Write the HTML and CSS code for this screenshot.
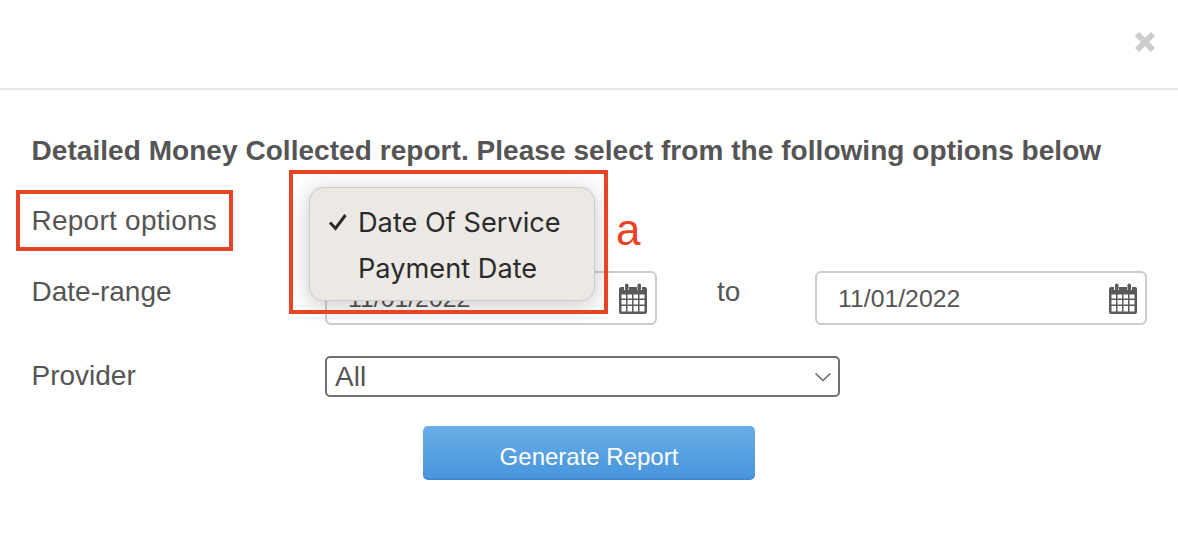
FILE: index.html
```html
<!DOCTYPE html>
<html>
<head>
<meta charset="utf-8">
<title>Detailed Money Collected report</title>
<link rel="stylesheet" href="styles.css">
</head>
<body>
<div class="modal">
    <div class="modal-header">
        <svg class="close" width="22" height="22" viewBox="0 0 22 22"><path d="M3 3 L19 19 M19 3 L3 19" stroke="#cccccc" stroke-width="6"/></svg>
    </div>
    <div class="modal-body">
        <h2 class="intro">Detailed Money Collected report. Please select from the following options below</h2>

        <div class="row row-options">
            <span class="label label-wide">Report options</span>
        </div>

        <div class="row row-dates">
            <span class="label">Date-range</span>
            <div class="date-input">
                <span>11/01/2022</span>
                <svg class="cal" width="30" height="32" viewBox="0 0 30 32"><use href="#cal-icon"/></svg>
            </div>
            <span class="to">to</span>
            <div class="date-input">
                <span>11/01/2022</span>
                <svg class="cal" width="30" height="32" viewBox="0 0 30 32"><use href="#cal-icon"/></svg>
            </div>
        </div>

        <div class="row row-provider">
            <span class="label">Provider</span>
            <div class="provider-select">
                <span>All</span>
                <svg width="18" height="10" viewBox="0 0 18 10"><path d="M1.5 1.5 L9 8.5 L16.5 1.5" fill="none" stroke="#666666" stroke-width="1.6"/></svg>
            </div>
        </div>

        <div class="actions">
            <button class="generate">Generate Report</button>
        </div>
    </div>
</div>

<div class="popup">
    <div class="popup-item">
        <span class="tick"><svg width="20" height="18" viewBox="0 0 20 18"><path d="M2 9.5 L7.5 15.5 L17.5 2" fill="none" stroke="#2b2b2b" stroke-width="3"/></svg></span>Date Of Service
    </div>
    <div class="popup-item"><span class="tick"></span>Payment Date</div>
</div>

<div class="mark mark-label"></div>
<div class="mark mark-popup"></div>
<span class="mark-letter">a</span>

<svg class="defs" width="0" height="0">
    <symbol id="cal-icon" viewBox="0 0 30 32">
        <path fill="#5a5a5a" fill-rule="evenodd" d="M3 4 H6 V7 H11 V4 H19 V7 H24 V4 H27 Q29 4 29 6 V29 Q29 31 27 31 H3 Q1 31 1 29 V6 Q1 4 3 4 Z M3.5 11.5 V15.5 H8 V11.5 Z M9.5 11.5 V15.5 H14 V11.5 Z M15.5 11.5 V15.5 H20 V11.5 Z M21.5 11.5 V15.5 H26.5 V11.5 Z M3.5 17 V21.5 H8 V17 Z M9.5 17 V21.5 H14 V17 Z M15.5 17 V21.5 H20 V17 Z M21.5 17 V21.5 H26.5 V17 Z M3.5 23 V28.5 H8 V23 Z M9.5 23 V28.5 H14 V23 Z M15.5 23 V28.5 H20 V23 Z M21.5 23 V28.5 H26.5 V23 Z"/>
        <rect x="7" y="0.5" width="3.5" height="7" rx="1.7" fill="#5a5a5a"/>
        <rect x="19.5" y="0.5" width="3.5" height="7" rx="1.7" fill="#5a5a5a"/>
    </symbol>
</svg>
</body>
</html>
```

FILE: styles.css
```css
body {
    margin: 0;
    background-color: white;
    color: #555555;
    font-family: "Liberation Sans", Arial, sans-serif;
    font-size: 28px;
    height: 540px;
    overflow: hidden;
}

.modal-header {
    height: 57px;
    border-bottom: 2px solid #e5e5e5;
    display: flex;
    justify-content: flex-end;
    align-items: flex-start;
    padding: 31px 22px 0 0;
}

.modal-body {
    padding: 44px 32px 0;
}

.intro {
    margin: 0;
    font-size: 28px;
    line-height: 34px;
    font-weight: bold;
    letter-spacing: 0.05px;
    text-indent: -0.5px;
    color: #555555;
}

.row {
    display: flex;
    align-items: center;
}

.label {
    width: 293px;
    flex: none;
    line-height: 34px;
    text-indent: -0.5px;
}

.label-wide {
    letter-spacing: 0.25px;
}

.row-options {
    margin-top: 36px;
}

.row-dates {
    margin-top: 33px;
    align-items: flex-start;
}

.row-dates .label,
.row-dates .to {
    padding-top: 4px;
}

.date-input {
    width: 332px;
    height: 54px;
    flex: none;
    box-sizing: border-box;
    border: 2px solid #cccccc;
    border-radius: 6px;
    display: flex;
    align-items: center;
    justify-content: space-between;
    padding: 1px 7px 0 21px;
    font-size: 24.8px;
}

.to {
    width: 158px;
    flex: none;
    padding-left: 60px;
    box-sizing: border-box;
    line-height: 34px;
}

.row-provider {
    margin-top: 31px;
}

.row-provider .label {
    padding-bottom: 2px;
}

.provider-select {
    width: 515px;
    height: 41px;
    flex: none;
    box-sizing: border-box;
    border: 2px solid #707070;
    border-radius: 5px;
    display: flex;
    align-items: center;
    justify-content: space-between;
    padding: 1px 6px 0 8px;
}

.actions {
    margin-top: 29px;
    padding-left: 391px;
}

.generate {
    display: block;
    width: 332px;
    height: 54px;
    padding: 10px 0 0;
    border: 0;
    border-bottom: 2px solid #4389cc;
    border-radius: 5px;
    background: linear-gradient(#69ade6, #4896dc);
    color: white;
    font-family: inherit;
    font-size: 24px;
}

.popup {
    position: absolute;
    left: 309px;
    top: 187px;
    width: 286px;
    height: 114px;
    box-sizing: border-box;
    padding-top: 11px;
    background-color: #ece9e4;
    border: 1px solid #cfccc8;
    border-radius: 14px;
    box-shadow: 0 4px 22px rgba(0, 0, 0, 0.22);
    color: #2b2b2b;
    font-family: "Inter", "Liberation Sans", sans-serif;
    font-size: 27.2px;
}

.popup-item {
    display: flex;
    align-items: center;
    height: 46px;
    white-space: nowrap;
}

.tick {
    width: 48px;
    flex: none;
    display: flex;
    padding-left: 18px;
    box-sizing: border-box;
}

.mark {
    position: absolute;
    box-sizing: border-box;
    border: 4px solid #e94326;
}

.mark-label {
    left: 16px;
    top: 190px;
    width: 217px;
    height: 61px;
}

.mark-popup {
    left: 289px;
    top: 170px;
    width: 319px;
    height: 144px;
}

.mark-letter {
    position: absolute;
    left: 616px;
    top: 205px;
    color: #e94326;
    font-size: 44px;
    line-height: 50px;
}

.defs {
    position: absolute;
}
```
